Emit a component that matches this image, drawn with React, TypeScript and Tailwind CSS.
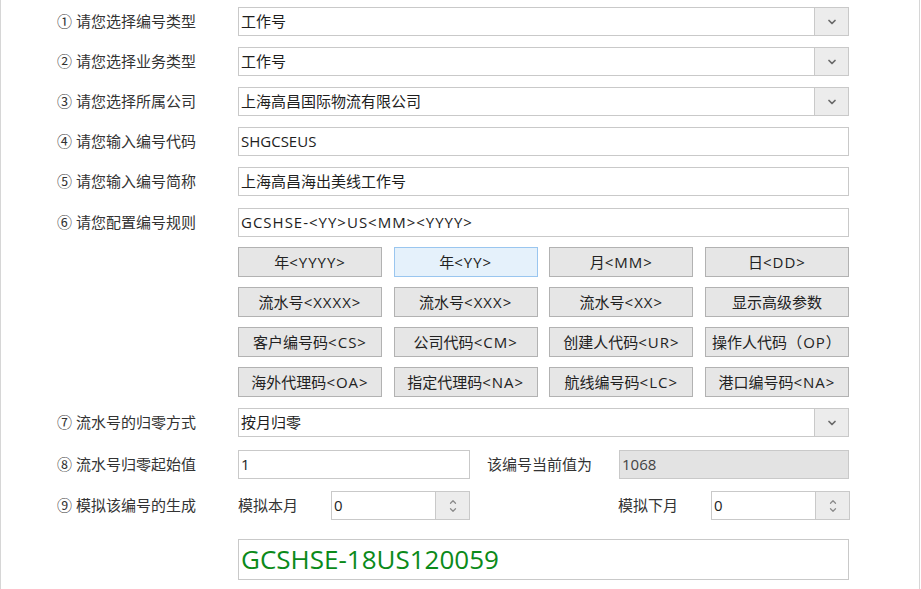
import { ChevronDown, ChevronUp } from "lucide-react";

const font = { fontFamily: '"Open Sans", "Noto Sans CJK SC", sans-serif' };

// Latin code parts (<YY>, <CS>...) are set a little looser, like the original UI font
function Code({ text }: { text: string }) {
    const parts = text.split(/([A-Za-z<>\-()（）]+)/);
    return (
        <>
            {parts.map((p, i) =>
                /[A-Za-z<>]/.test(p) ? (
                    <span key={i} className="tracking-[1px]">
                        {p}
                    </span>
                ) : (
                    <span key={i}>{p}</span>
                )
            )}
        </>
    );
}

function Label({ text }: { text: string }) {
    return <div className="w-[181px] shrink-0 text-[15px] text-[#333] leading-none">{text}</div>;
}

function Select({ value }: { value: string }) {
    return (
        <div className="flex h-[29px] w-[611px] border border-[#c9c9c9] bg-white">
            <div className="flex flex-1 items-center px-[2px] text-[15px] text-[#1e1e1e]">{value}</div>
            <div className="flex w-[34px] items-center justify-center border-l border-[#c9c9c9] bg-[#ececec]">
                <ChevronDown className="h-[12px] w-[12px] text-[#6a6a6a]" strokeWidth={3.5} />
            </div>
        </div>
    );
}

function Input({ value, className = "w-[611px]" }: { value: React.ReactNode; className?: string }) {
    return (
        <div className={`flex h-[29px] items-center border border-[#c9c9c9] bg-white px-[2px] text-[15px] text-[#1e1e1e] ${className}`}>
            {value}
        </div>
    );
}

function Spinner({ value }: { value: string }) {
    return (
        <div className="flex h-[29px] w-[139px] border border-[#c9c9c9] bg-white">
            <div className="flex flex-1 items-center px-[2px] text-[15px] text-[#1e1e1e]">{value}</div>
            <div className="flex w-[34px] flex-col items-center justify-center border-l border-[#c9c9c9] bg-[#ececec] text-[#8a8a8a]">
                <ChevronUp className="-mb-[2px] h-[10px] w-[10px]" strokeWidth={3} />
                <ChevronDown className="h-[10px] w-[10px]" strokeWidth={3} />
            </div>
        </div>
    );
}

const buttons = [
    "年<YYYY>", "年<YY>", "月<MM>", "日<DD>",
    "流水号<XXXX>", "流水号<XXX>", "流水号<XX>", "显示高级参数",
    "客户编号码<CS>", "公司代码<CM>", "创建人代码<UR>", "操作人代码（OP）",
    "海外代理码<OA>", "指定代理码<NA>", "航线编号码<LC>", "港口编号码<NA>",
];

export default function App() {
    return (
        <div style={font} className="h-[589px] w-[921px] bg-white">
            <div className="h-[589px] w-[920px] border-x border-[#d6d6d6] pl-[56px] pt-[7px]">
                <div className="flex flex-col">
                    <div className="flex items-center">
                        <Label text="① 请您选择编号类型" />
                        <Select value="工作号" />
                    </div>
                    <div className="mt-[11px] flex items-center">
                        <Label text="② 请您选择业务类型" />
                        <Select value="工作号" />
                    </div>
                    <div className="mt-[11px] flex items-center">
                        <Label text="③ 请您选择所属公司" />
                        <Select value="上海高昌国际物流有限公司" />
                    </div>
                    <div className="mt-[11px] flex items-center">
                        <Label text="④ 请您输入编号代码" />
                        <Input value="SHGCSEUS" />
                    </div>
                    <div className="mt-[11px] flex items-center">
                        <Label text="⑤ 请您输入编号简称" />
                        <Input value="上海高昌海出美线工作号" />
                    </div>
                    <div className="mt-[12px] flex items-start">
                        <div className="flex h-[29px] items-center">
                            <Label text="⑥ 请您配置编号规则" />
                        </div>
                        <div className="flex flex-col">
                            <Input value={<span className="tracking-[1px]">GCSHSE-&lt;YY&gt;US&lt;MM&gt;&lt;YYYY&gt;</span>} />
                            <div className="mt-[10px] grid w-[611px] grid-cols-4 gap-x-[11.6px] gap-y-[10px]">
                                {buttons.map((b, i) => (
                                    <div
                                        key={i}
                                        className={`flex h-[30px] items-center justify-center border text-[15px] text-[#222] ${
                                            i === 1 ? "border-[#9ac6ef] bg-[#e5f1fb]" : "border-[#b2b2b2] bg-[#e6e6e6]"
                                        }`}
                                    >
                                        <Code text={b} />
                                    </div>
                                ))}
                            </div>
                        </div>
                    </div>
                    <div className="mt-[11px] flex items-center">
                        <Label text="⑦ 流水号的归零方式" />
                        <Select value="按月归零" />
                    </div>
                    <div className="mt-[13px] flex items-center">
                        <Label text="⑧ 流水号归零起始值" />
                        <Input value="1" className="w-[232px]" />
                        <div className="ml-[17px] w-[132px] text-[15px] text-[#333]">该编号当前值为</div>
                        <div className="flex h-[29px] w-[230px] items-center border border-[#c9c9c9] bg-[#e3e3e3] px-[2px] text-[15px] text-[#444]">
                            1068
                        </div>
                    </div>
                    <div className="mt-[12px] flex items-center">
                        <Label text="⑨ 模拟该编号的生成" />
                        <div className="w-[93px] text-[15px] text-[#333]">模拟本月</div>
                        <Spinner value="0" />
                        <div className="ml-[148px] w-[93px] text-[15px] text-[#333]">模拟下月</div>
                        <Spinner value="0" />
                    </div>
                    <div className="mt-[19px] flex">
                        <div className="w-[181px] shrink-0" />
                        <div className="flex h-[41px] w-[611px] items-center border border-[#c9c9c9] bg-white px-[2px] text-[26px] text-[#0b8a1a]">
                            GCSHSE-18US120059
                        </div>
                    </div>
                </div>
            </div>
        </div>
    );
}
